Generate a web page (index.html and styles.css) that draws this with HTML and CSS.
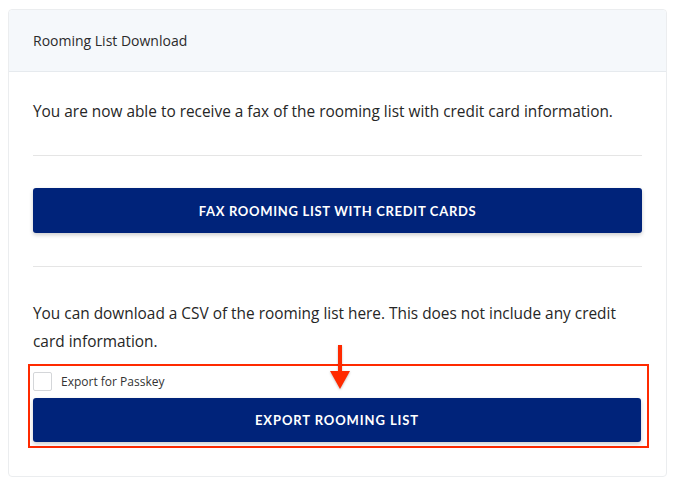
FILE: index.html
```html
<!DOCTYPE html>
<html>
<head>
<meta charset="utf-8">
<link rel="stylesheet" href="styles.css">
</head>
<body>
<div class="card">
  <div class="card-header">Rooming List Download</div>
  <div class="card-body">
    <p class="text first">You are now able to receive a fax of the rooming list with credit card information.</p>
    <hr class="divider">
    <button class="btn">FAX ROOMING LIST WITH CREDIT CARDS</button>
    <hr class="divider">
    <p class="text csv">You can download a CSV of the rooming list here. This does not include any credit card information.</p>
    <div class="highlight">
      <label class="check-row"><span class="checkbox"></span><span class="check-label">Export for Passkey</span></label>
      <button class="btn">EXPORT ROOMING LIST</button>
      <svg class="arrow" width="24" height="46" viewBox="0 0 24 46">
        <path d="M10 0 H14 V26 H22 L12 44 L2 26 H10 Z" fill="#ff2a00"/>
      </svg>
    </div>
  </div>
</div>
</body>
</html>
```

FILE: styles.css
```css
* { box-sizing: border-box; }
body {
  margin: 0;
  padding: 9px 7px 0 8px;
  background: #fff;
  font-family: "Open Sans", Lato, sans-serif;
  color: #222;
}
.card {
  border: 1px solid #ebedef;
  border-radius: 4px;
  height: 468px;
}
.card-header {
  height: 62px;
  background: #f5f8fb;
  border-bottom: 1px solid #e6eaee;
  padding: 0 24px;
  display: flex;
  align-items: center;
  font-size: 14px;
  color: #2b2b2b;
  border-radius: 4px 4px 0 0;
}
.card-body {
  padding: 0 24px;
}
.text {
  margin: 0;
  font-size: 15.4px;
  line-height: 28px;
  color: #262626;
}
.first { padding-top: 26px; padding-bottom: 29px; }
.divider {
  border: 0;
  border-top: 1px solid #e5e5e5;
  margin: 0;
}
.btn {
  display: block;
  width: 100%;
  height: 45px;
  margin: 32px 0 33px;
  background: #00237a;
  color: #fff;
  border: 0;
  border-radius: 3px;
  box-shadow: 0 2px 4px rgba(0,0,0,0.2);
  font-family: Lato, "Open Sans", sans-serif;
  font-weight: 700;
  font-size: 13px;
  letter-spacing: 0.7px;
}
.csv { padding-top: 33px; padding-bottom: 8px; }
.highlight {
  position: relative;
  margin: 0 -7px 0 -5px;
  border: 2px solid #ff2a00;
  padding: 4px 6px 4px 3px;
}
.highlight .btn { margin: 0; height: 44px; letter-spacing: 0.9px; }
.check-row {
  display: flex;
  align-items: center;
  height: 22px;
  margin-bottom: 6px;
}
.checkbox {
  width: 19px;
  height: 19px;
  border: 1px solid #d4d6d9;
  border-radius: 2px;
  margin-right: 9px;
}
.check-label { font-size: 12px; color: #333; }
.arrow {
  position: absolute;
  left: 298px;
  top: -21px;
  filter: drop-shadow(0 1px 1px rgba(0,0,0,0.25));
}
```
